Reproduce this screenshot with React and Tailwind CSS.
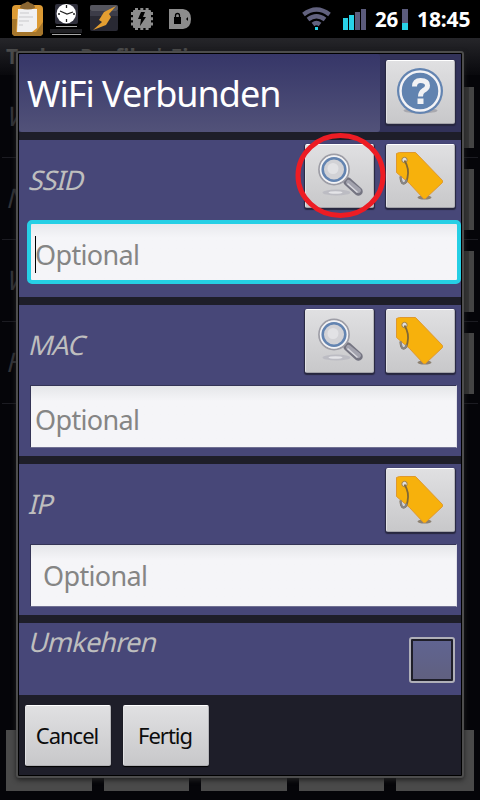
import clsx from 'clsx';

function StatusBar() {
  return (
    <div className="flex h-[38px] items-start bg-black">
      <svg width="200" height="38" viewBox="0 0 200 38">
        <rect x="12" y="5" width="31" height="31" rx="4" fill="#dc9a34" />
        <path d="M12 19h5l-1 13h20l7-10v10a4 4 0 0 1-4 4H16a4 4 0 0 1-4-4z" fill="#a5762c" />
        <path d="M18 9h19v19l-5 4H17z" fill="#f0f0f2" />
        <path d="M20 13h9M19 17h14M19 21h10M19 25h4" stroke="#c9c9cc" fill="none" />
        <path d="M20 8q0-4 5-5 3-3 5 0 5 1 5 5-7 3-15 0z" fill="#8a6632" />
        <rect x="55" y="4" width="23" height="20" rx="2" fill="#30303c" />
        <circle cx="66.300" cy="13.700" r="9.700" fill="#fff" />
        <path d="M60 11l7 3 6-2M66.500 5v3M66.500 19v3M58 14h2M73 14h2" stroke="#222" strokeWidth="1.300" fill="none" />
        <path d="M56 26.500h21M52 34.500h29" stroke="#a8a8a8" />
        <path d="M50 31h32" stroke="#202024" strokeWidth="4" />
        <rect x="90" y="5" width="28" height="26" rx="2" fill="#292933" />
        <rect x="90" y="5" width="28" height="6" rx="2" fill="#55555e" />
        <path d="M90 11h28v5H90z" fill="#3c3c48" />
        <path d="M116 6l-12 6-5 8 3 2-9 8 13-5 5-8-2-3z" fill="#e39e31" />
        <rect x="133" y="10" width="18" height="18" rx="1" fill="#8c8c8c" />
        <path d="M135 9.500h14M135 28.500h14M132.500 12v14M151.500 12v14" stroke="#8c8c8c" strokeWidth="3" strokeDasharray="3 2.300" fill="none" />
        <path d="M141 12h4l-2 5h3l-6 9 1-7h-3z" fill="#000" />
        <path d="M169 9h14q8 1 8 10t-8 10h-14z" fill="#8c8c8c" />
        <rect x="174" y="17" width="7" height="7" fill="#000" />
        <path d="M175.500 18v-2.500a2 2 0 0 1 4 0V18" stroke="#000" strokeWidth="1.300" fill="none" />
        <path d="M188 17l-2 2 2 2z" fill="#000" />
      </svg>
      <svg className="ml-[100px]" width="72" height="38" viewBox="0 0 72 38">
        <path d="M3.500 14.500q13-10 26 0M8 19.500q8.500-6.500 17 0M13 24.500q3.500-3 7 0" stroke="#62627f" strokeWidth="4.300" fill="none" />
        <rect x="15" y="27" width="3" height="3" fill="#28d2e8" />
        <path d="M43 18h5v12h-5zM49 15h5v15h-5z" fill="#28d2e8" />
        <path d="M55 12h5v18h-5zM61 9h5v21h-5z" fill="#5b5b7c" />
      </svg>
      <span className="ml-[3px] mt-[5px] w-[27px] text-[20.5px] leading-[28px] font-bold tracking-[-0.2px] text-white">26</span>
      <span className="mt-[9px] flex h-[21px] w-[6px] flex-col bg-[#5b5b7c] pt-[14px]">
        <span className="h-[7px] bg-[#28d2e8]" />
      </span>
      <span className="ml-[9px] mt-[5px] text-[21px] leading-[28px] font-bold tracking-[-0.1px] text-white">18:45</span>
    </div>
  );
}

const profiles = ['WiFi Verbunden', 'Nicht WiFi Verbunden', 'WLAN', 'Home'];

function ProfileList() {
  return (
    <div className="flex h-[800px] w-[480px] flex-col bg-[#050509] [grid-area:1/1]">
      <StatusBar />
      <div className="h-[37px] overflow-hidden bg-linear-to-b from-[#26262a] to-[#09090d] pl-[6px] text-[21px] leading-[36px] font-bold text-[#4b4b4b]">
        Tasker Profile * Ein
      </div>
      {profiles.map((name) => (
        <div key={name} className="mx-[2px] flex h-[82px] translate-y-px items-center justify-between border-b border-[#1c1c22] pl-[6px] text-[27px] text-[#343438]">
          <span className="-skew-x-[14deg]">{name}</span>
          <span className="mt-[2px] mr-1 h-[61px] w-[80px] border-r-[5px] border-[#444] bg-[#353535]" />
        </div>
      ))}
      <div className="mt-auto mb-[9px] flex h-[61px] gap-[12px] px-[6px]">
        {[0, 1, 2, 3, 4].map((i) => (
          <span key={i} className={clsx('bg-[#4a4a4a]', i === 4 ? 'w-[78px]' : 'w-[86px]')} />
        ))}
      </div>
    </div>
  );
}

function IconButton({ children }) {
  return (
    <button className="flex h-[64px] w-[69px] items-center justify-center rounded-[2px] border border-t-white border-r-[#b4b4b8] border-b-[#a2a2a8] border-l-[#e2e2e4] bg-linear-to-b from-[#e0e0e2] to-[#c8c8ca] shadow-[0_1px_1px_1px_#27273f]">
      {children}
    </button>
  );
}

function HelpButton() {
  return (
    <IconButton>
      <svg width="67" height="62" viewBox="0.5 0.5 67 62">
        <ellipse cx="34" cy="50" rx="17" ry="3" fill="#a8a8ae" />
        <circle cx="33.500" cy="30.500" r="23" fill="#6384b1" />
        <circle cx="33.500" cy="30.500" r="19.500" fill="#6183b0" stroke="#f3f3f6" strokeWidth="2.500" />
        <path d="M28 26q0-6 6-6 7 0 7 5 0 3-4 5-3 2-3 6" stroke="#f2f2f4" strokeWidth="5" fill="none" />
        <rect x="31" y="38" width="6" height="5.500" fill="#f2f2f4" />
      </svg>
    </IconButton>
  );
}

function SearchButton() {
  return (
    <IconButton>
      <svg width="67" height="62" viewBox="0.5 0.5 67 62">
        <ellipse cx="31" cy="48" rx="14" ry="3" fill="#bcbcc3" />
        <ellipse cx="30" cy="48" rx="7" ry="1.300" fill="#e4e4e8" />
        <path d="M42 37l11 10" stroke="#747481" strokeWidth="8.500" strokeLinecap="round" />
        <path d="M43 38l10 8" stroke="#a3a3ae" strokeWidth="5" strokeLinecap="round" />
        <path d="M42 39l10 9" stroke="#d8d8de" strokeWidth="1.500" />
        <circle cx="28.500" cy="25" r="15" fill="#d2d2d8" stroke="#9d9da6" strokeWidth="1.800" />
        <circle cx="28.500" cy="25" r="13.200" fill="none" stroke="#f3f3f5" strokeWidth="2" />
        <circle cx="28.500" cy="25" r="11.300" fill="#d2d2d6" stroke="#6384b1" strokeWidth="2.500" />
        <circle cx="27.500" cy="24" r="5.500" fill="#e2e2e5" />
      </svg>
    </IconButton>
  );
}

function TagButton() {
  return (
    <IconButton>
      <svg width="67" height="62" viewBox="0.5 0.5 67 62">
        <ellipse cx="38" cy="53" rx="7" ry="2" fill="#8c8170" />
        <path d="M10 9l3-1h16l27 28v2L39 54h-2L23 39 10 28z" fill="#f7b10c" stroke="#df982d" />
        <circle cx="18" cy="15.500" r="2.700" fill="#e0e0e2" stroke="#a08148" />
        <path d="M18 16q5 8 3 17-1 6-4 6t-3-7" stroke="#806735" strokeWidth="1.800" fill="none" />
        <path d="M20 35q-1 4-3 4t-3-7" stroke="#85858a" strokeWidth="2" fill="none" />
      </svg>
    </IconButton>
  );
}

function Field({ label, searchable, focused, indented }) {
  return (
    <section className={clsx('mt-[8px] bg-[#474778] pt-[4px]', focused ? 'h-[157px]' : 'h-[151px]')}>
      <div className="flex h-[65px] gap-[12px] pr-[6px] pl-[11px]">
        <span className="flex-1 pt-[18px] text-[27px] leading-[36px] tracking-[-1px] text-[#bebebe]">
          <span className="inline-block -skew-x-[14deg]">{label}</span>
        </span>
        {searchable && <SearchButton />}
        <TagButton />
      </div>
      {focused ? (
        <div className="mt-[11px] ml-[8px] flex h-[64px] items-center rounded-[5px] border-4 border-[#26cfe5] bg-linear-to-b from-[#e8e9ed] to-[#f5f5f8] to-25% pt-[5px] pl-[4px]">
          <span className="h-[37px] w-px bg-black" />
          <span className="-ml-px text-[27px] leading-[36px] tracking-[-0.65px] text-[#858585]">Optional</span>
        </div>
      ) : (
        <div
          className={clsx(
            'mt-[11px] mr-[4px] ml-[11px] flex h-[63px] items-center border border-t-[#343456] border-r-[#e0e0e8] border-b-[#707092] border-l-[#343456] bg-linear-to-b from-[#e5e6e9] to-[#f5f5f8] to-25%',
            indented ? 'pt-[1px] pl-[12px]' : 'pt-[6px] pl-[4px]'
          )}
        >
          <span className="text-[27px] leading-[36px] tracking-[-0.65px] text-[#858585]">Optional</span>
        </div>
      )}
    </section>
  );
}

function TextButton({ children }) {
  return (
    <button className="h-[61px] w-[86px] rounded-[2px] border border-t-white border-r-[#b4b4b8] border-b-[#b0b0b4] border-l-[#e2e2e4] bg-linear-to-b from-[#e0e0e2] to-[#c8c8ca] pr-[2px] text-[22px] tracking-[-1px] text-[#0c0c0c] shadow-[0_1px_1px_#000]">
      {children}
    </button>
  );
}

function WifiDialog() {
  return (
    <div className="z-10 mt-[51px] ml-[16px] h-[727px] w-[448px] rounded-[3px] border-2 border-[#4d4d4d] bg-black p-px shadow-[0_2px_5px_#222] [grid-area:1/1]">
      <div className="h-[721px] bg-[#1e1e29]">
        <header className="flex h-[78px] justify-between bg-[#323259] pr-[6px]">
          <h1 className="w-[361px] rounded-[3px] bg-linear-to-b from-[#363668] to-[#525279] pl-[8px] text-[36px] leading-[80px] tracking-[-1px] whitespace-nowrap text-white">
            WiFi Verbunden
          </h1>
          <div className="pt-[6px]">
            <HelpButton />
          </div>
        </header>
        <Field label="SSID" searchable focused />
        <Field label="MAC" searchable />
        <Field label="IP" indented />
        <section className="mt-[8px] flex h-[72px] items-start justify-between bg-[#474778] pr-[6px] pl-[11px]">
          <span className="-skew-x-[14deg] text-[27px] leading-[37px] tracking-[-0.8px] text-[#bebebe]">Umkehren</span>
          <span className="mt-[14px] h-[46px] w-[46px] rounded-[3px] border-2 border-[#afafb8] bg-[#1e1e29] p-[2px]">
            <span className="block h-[38px] bg-linear-to-b from-[#606491] to-[#606080]" />
          </span>
        </section>
        <footer className="flex gap-[12px] px-[6px] pt-[10px]">
          <TextButton>Cancel</TextButton>
          <TextButton>Fertig</TextButton>
        </footer>
      </div>
    </div>
  );
}

export default function App() {
  return (
    <div className="grid h-[800px] w-[480px] overflow-hidden font-['Noto_Sans',sans-serif]">
      <ProfileList />
      <WifiDialog />
      <svg className="z-20 mt-[133px] ml-[295px] [grid-area:1/1]" width="92" height="86" viewBox="0 0 92 86">
        <ellipse cx="45.500" cy="42.500" rx="42.500" ry="40" fill="none" stroke="#ed1c24" strokeWidth="5" />
      </svg>
    </div>
  );
}
